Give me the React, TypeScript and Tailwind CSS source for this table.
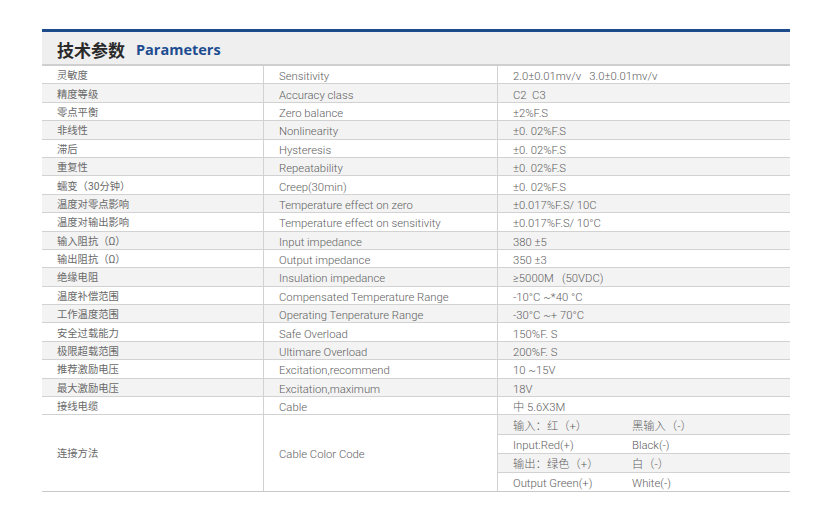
const rows: [string, string, string][] = [
  ["灵敏度", "Sensitivity", "2.0±0.01mv/v   3.0±0.01mv/v"],
  ["精度等级", "Accuracy class", "C2  C3"],
  ["零点平衡", "Zero balance", "±2%F.S"],
  ["非线性", "Nonlinearity", "±0. 02%F.S"],
  ["滞后", "Hysteresis", "±0. 02%F.S"],
  ["重复性", "Repeatability", "±0. 02%F.S"],
  ["蠕变（30分钟）", "Creep(30min)", "±0. 02%F.S"],
  ["温度对零点影响", "Temperature effect on zero", "±0.017%F.S/ 10C"],
  ["温度对输出影响", "Temperature effect on sensitivity", "±0.017%F.S/ 10°C"],
  ["输入阻抗（Ω）", "Input impedance", "380 ±5"],
  ["输出阻抗（Ω）", "Output impedance", "350 ±3"],
  ["绝缘电阻", "Insulation impedance", "≥5000M   (50VDC)"],
  ["温度补偿范围", "Compensated Temperature Range", "-10°C ~*40 °C"],
  ["工作温度范围", "Operating Tenperature Range", "-30°C ~+ 70°C"],
  ["安全过载能力", "Safe Overload", "150%F. S"],
  ["极限超载范围", "Ultimare Overload", "200%F. S"],
  ["推荐激励电压", "Excitation,recommend", "10 ~15V"],
  ["最大激励电压", "Excitation,maximum", "18V"],
  ["接线电缆", "Cable", "中 5.6X3M"],
];

const cable: [string, string][] = [
  ["输入：红（+）", "黑输入（-）"],
  ["Input:Red(+)", "Black(-)"],
  ["输出：绿色（+）", "白（-）"],
  ["Output Green(+)", "White(-)"],
];

const font = "font-['Roboto','Noto_Sans_CJK_SC',sans-serif]";

export default function App() {
  return (
    <div className={`w-[814px] h-[520px] bg-white pt-[29px] pl-[42px] ${font}`}>
      <div className="w-[748px]">
        <div className="h-[3px] bg-[#1c4a8b]" />
        <div className="h-[34px] bg-[#efefef] border-b-2 border-[#cfcfcf] flex items-center pl-[15px] pt-[3px] gap-[11px]">
          <span className="text-[17px] font-bold text-[#2a2a2a] font-['Noto_Sans_CJK_SC',sans-serif]">技术参数</span>
          <span className="text-[14.5px] font-bold text-[#1d4d90] font-['Open_Sans',sans-serif]">Parameters</span>
        </div>
        <div className="text-[11.3px] leading-[12px] font-light text-[#5e5e5e]">
          {rows.map(([cn, en, val], i) => (
            <div
              key={i}
              className={`flex h-[18.4px] border-b border-[#d2d2d2] ${i % 2 ? "bg-[#f3f3f3]" : "bg-white"}`}
            >
              <div className="w-[221px] pl-[15px] flex items-center pt-[3px] text-[10.3px] font-normal text-[#6a6a6a]">{cn}</div>
              <div className="w-[234px] pl-[15px] flex items-center pt-[5px] border-l border-[#d2d2d2]">{en}</div>
              <div className="flex-1 pl-[15px] flex items-center pt-[5px] border-l border-[#d2d2d2] whitespace-pre">{val}</div>
            </div>
          ))}
          <div className="flex h-[77px] border-b border-[#c8c8c8]">
            <div className="w-[221px] pl-[15px] flex items-center pt-[2px] text-[10.3px] font-normal text-[#6a6a6a]">连接方法</div>
            <div className="w-[234px] pl-[15px] flex items-center pt-[4px] border-l border-[#d2d2d2]">Cable Color Code</div>
            <div className="flex-1 flex flex-col border-l border-[#d2d2d2]">
              {cable.map(([a, b], i) => (
                <div
                  key={i}
                  className={`flex flex-1 items-center pt-[4px] ${i < 3 ? "border-b border-[#d2d2d2]" : ""} ${i % 2 ? "bg-white" : "bg-[#f3f3f3]"}`}
                >
                  <div className="w-[134px] pl-[15px]">{a}</div>
                  <div>{b}</div>
                </div>
              ))}
            </div>
          </div>
        </div>
      </div>
    </div>
  );
}
